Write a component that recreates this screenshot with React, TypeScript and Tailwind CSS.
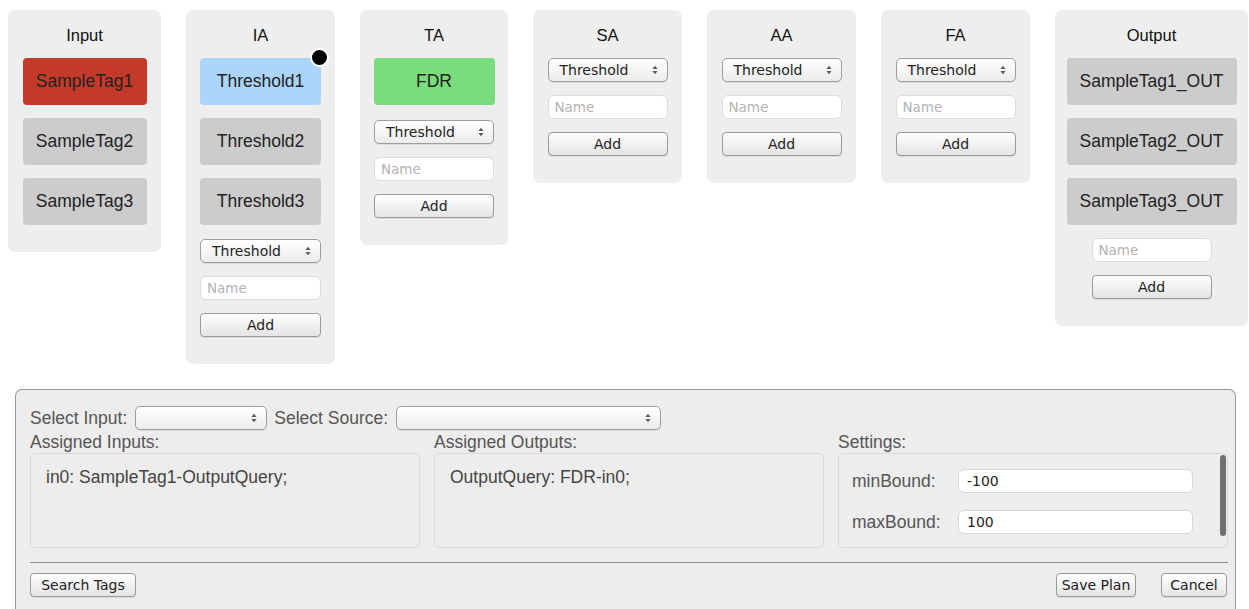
import React from "react";

const sans = "font-['Liberation_Sans',Arial,sans-serif]";
const ui = "font-['DejaVu_Sans','Liberation_Sans',sans-serif]";

function UpDown() {
  return (
    <svg width="6" height="10" viewBox="0 0 6 10" className="shrink-0">
      <path d="M3 0.8 L5.6 4 H0.4 Z M3 9.2 L5.6 6 H0.4 Z" fill="#5c5c5c" />
    </svg>
  );
}

function Select({ label, className }: { label?: string; className: string }) {
  return (
    <div
      className={`flex h-[24px] items-center justify-between rounded-[5px] border border-[#9d9d9d] bg-gradient-to-b from-white to-[#ececec] pl-[11px] pr-[9px] shadow-[0_1px_0_rgba(0,0,0,0.08)] ${ui} text-[14px] text-[#222] ${className}`}
    >
      <span>{label}</span>
      <UpDown />
    </div>
  );
}

function NameField({ className }: { className: string }) {
  return (
    <div
      className={`flex h-[24px] items-center rounded-[6px] border border-[#dcdcdc] bg-white pl-[6px] ${ui} text-[13.5px] text-[#b3b3b3] ${className}`}
    >
      Name
    </div>
  );
}

function Button({ label, className }: { label: string; className: string }) {
  return (
    <div
      className={`flex h-[24px] items-center justify-center rounded-[4px] border border-[#9a9a9a] bg-gradient-to-b from-white to-[#e4e4e4] shadow-[0_1px_0_rgba(0,0,0,0.08)] ${ui} text-[14px] text-[#222] ${className}`}
    >
      {label}
    </div>
  );
}

function Panel({
  title,
  className,
  children,
}: {
  title: string;
  className: string;
  children: React.ReactNode;
}) {
  return (
    <div className={`shrink-0 rounded-[7px] bg-[#eeeeee] pb-[27px] ${className}`}>
      <div className={`flex h-[48px] items-center justify-center pt-[3px] ${sans} text-[16.5px] text-[#111]`}>
        {title}
      </div>
      <div className="flex flex-col items-center">{children}</div>
    </div>
  );
}

function Tag({
  label,
  className,
  children,
}: {
  label: string;
  className: string;
  children?: React.ReactNode;
}) {
  return (
    <div
      className={`relative flex h-[47px] items-center justify-center rounded-[4px] ${sans} text-[17.5px] text-[#222] ${className}`}
    >
      {label}
      {children}
    </div>
  );
}

function AddControls({ width, top }: { width: string; top: string }) {
  return (
    <>
      <Select label="Threshold" className={`${width} ${top}`} />
      <NameField className={`${width} mt-[13px]`} />
      <Button label="Add" className={`${width} mt-[13px]`} />
    </>
  );
}

export default function App() {
  return (
    <div className={`min-h-[609px] w-[1249px] bg-white ${sans}`}>
      {/* pipeline stages */}
      <div className="flex items-start gap-[25px] pl-[8px] pt-[10px]">
        <Panel title="Input" className="w-[153px]">
          <div className="flex flex-col gap-[13px]">
            <Tag label="SampleTag1" className="w-[124px] bg-[#c43a2a] text-[#2a0e0a]" />
            <Tag label="SampleTag2" className="w-[124px] bg-[#cccccc]" />
            <Tag label="SampleTag3" className="w-[124px] bg-[#cccccc]" />
          </div>
        </Panel>

        <Panel title="IA" className="w-[149px]">
          <div className="flex flex-col gap-[13px]">
            <Tag label="Threshold1" className="w-[121px] bg-[#acd5fb]">
              <span className="absolute -right-[8px] -top-[10px] h-[19px] w-[19px] rounded-full border-2 border-white bg-black" />
            </Tag>
            <Tag label="Threshold2" className="w-[121px] bg-[#cccccc]" />
            <Tag label="Threshold3" className="w-[121px] bg-[#cccccc]" />
          </div>
          <AddControls width="w-[121px]" top="mt-[14px]" />
        </Panel>

        <Panel title="TA" className="w-[148px]">
          <Tag label="FDR" className="w-[121px] bg-[#7bdc7d]" />
          <AddControls width="w-[120px]" top="mt-[15px]" />
        </Panel>

        <Panel title="SA" className="w-[149px]">
          <AddControls width="w-[120px]" top="mt-0" />
        </Panel>

        <Panel title="AA" className="w-[149px]">
          <AddControls width="w-[120px]" top="mt-0" />
        </Panel>

        <Panel title="FA" className="w-[149px]">
          <AddControls width="w-[120px]" top="mt-0" />
        </Panel>

        <Panel title="Output" className="w-[193px]">
          <div className="flex flex-col gap-[13px]">
            <Tag label="SampleTag1_OUT" className="w-[170px] bg-[#cccccc]" />
            <Tag label="SampleTag2_OUT" className="w-[170px] bg-[#cccccc]" />
            <Tag label="SampleTag3_OUT" className="w-[170px] bg-[#cccccc]" />
          </div>
          <NameField className="w-[120px] mt-[13px]" />
          <Button label="Add" className="w-[120px] mt-[13px]" />
        </Panel>
      </div>

      {/* plan editor */}
      <div className="ml-[15px] mt-[25px] h-[240px] w-[1221px] rounded-t-[7px] border border-b-0 border-[#999999] bg-[#ededed] pl-[14px] pr-[7px] pt-[16px]">
        <div className="flex h-[24px] items-center text-[17.5px] leading-[24px] text-[#555]">
          <span>Select Input:</span>
          <Select className="ml-[8px] w-[132px]" />
          <span className="ml-[7px]">Select Source:</span>
          <Select className="ml-[8px] w-[265px]" />
        </div>

        <div className="grid grid-cols-3 gap-x-[14px] text-[17.5px] leading-[24px] text-[#555]">
          <div>
            <div className="flex h-[23px] items-center">Assigned Inputs:</div>
            <div className="h-[95px] rounded-[5px] border border-[#d9d9d9] pl-[15px] pt-[13px] leading-[20px] text-[#444]">
              in0: SampleTag1-OutputQuery;
            </div>
          </div>
          <div>
            <div className="flex h-[23px] items-center">Assigned Outputs:</div>
            <div className="h-[95px] rounded-[5px] border border-[#d9d9d9] pl-[15px] pt-[13px] leading-[20px] text-[#444]">
              OutputQuery: FDR-in0;
            </div>
          </div>
          <div>
            <div className="flex h-[23px] items-center">Settings:</div>
            <div className="relative h-[95px] rounded-[5px] border border-[#d9d9d9] pl-[13px] pt-[15px]">
              <div className="flex h-[24px] items-center">
                <span className="w-[106px]">minBound:</span>
                <div className={`flex h-[24px] w-[235px] items-center rounded-[6px] border border-[#d6d6d6] bg-white pl-[8px] ${ui} text-[14px] text-[#222]`}>
                  -100
                </div>
              </div>
              <div className="mt-[17px] flex h-[24px] items-center">
                <span className="w-[106px]">maxBound:</span>
                <div className={`flex h-[24px] w-[235px] items-center rounded-[6px] border border-[#d6d6d6] bg-white pl-[8px] ${ui} text-[14px] text-[#222]`}>
                  100
                </div>
              </div>
              <span className="absolute right-[1px] top-[1px] h-[81px] w-[6px] rounded-full bg-[#707070]" />
            </div>
          </div>
        </div>

        <div className="mt-[14px] h-px bg-[#8c8c8c]" />

        <div className="mt-[10px] flex items-center">
          <Button label="Search Tags" className="w-[106px]" />
          <div className="ml-auto flex gap-[25px] pr-[1px]">
            <Button label="Save Plan" className="w-[80px]" />
            <Button label="Cancel" className="w-[66px]" />
          </div>
        </div>
      </div>
    </div>
  );
}
